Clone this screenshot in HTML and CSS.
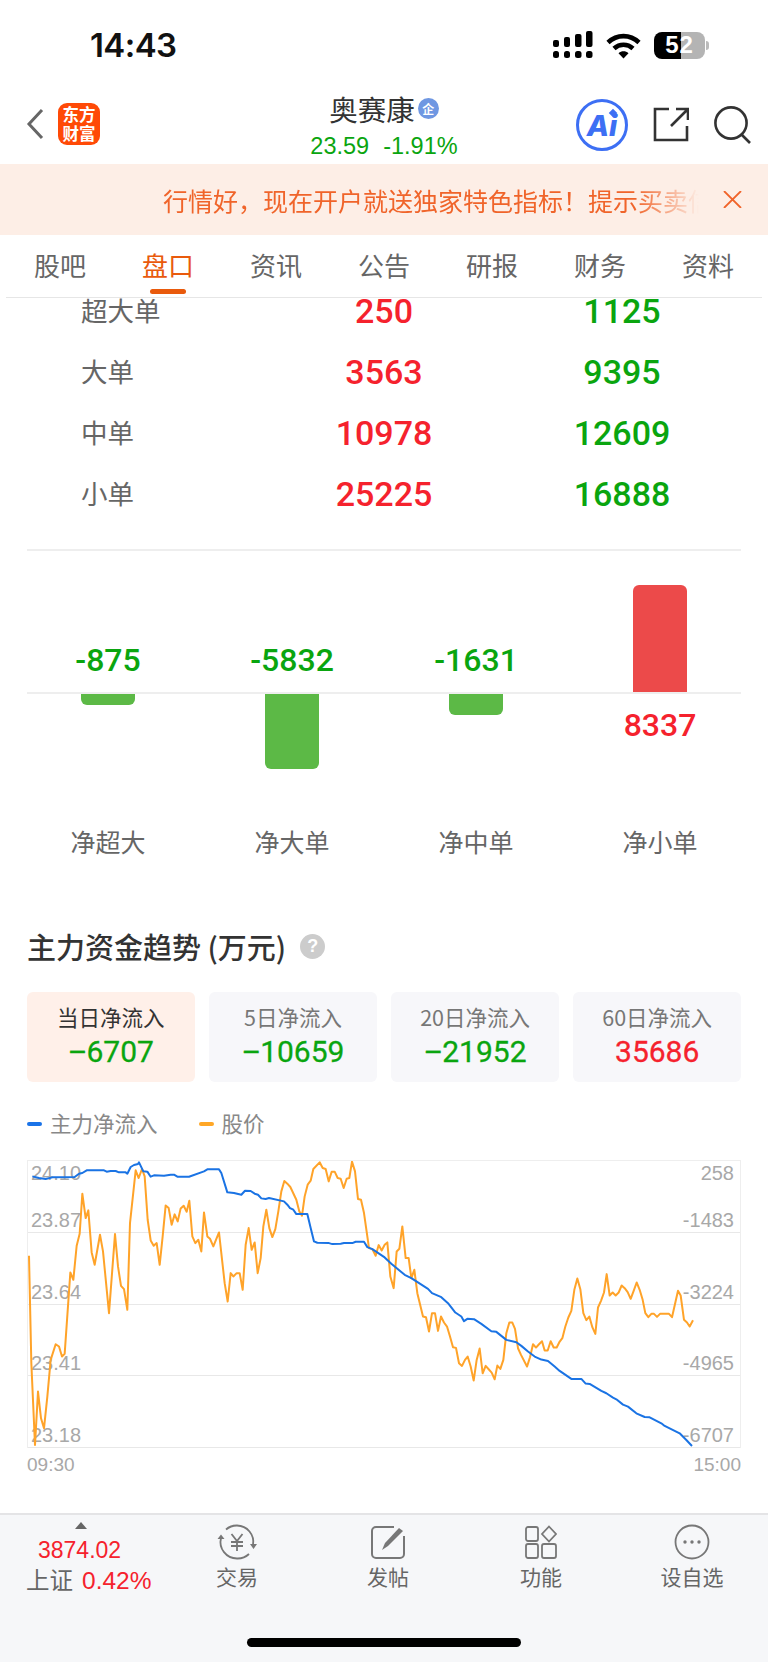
FILE: index.html
```html
<!DOCTYPE html>
<html lang="zh">
<head>
<meta charset="utf-8">
<title>奥赛康</title>
<link rel="stylesheet" href="styles.css">
</head>
<body>
<div class="app">
  <div class="status">
    <span class="time">14:43</span>
    <div class="status-icons">
      <svg class="signal" width="40" height="28" viewBox="0 0 40 28"><g fill="#000"><rect x="0" y="9" width="6" height="7" rx="2"/><rect x="11" y="6" width="6" height="10" rx="2"/><rect x="22" y="3" width="6.500" height="13" rx="2"/><rect x="33" y="0" width="6.500" height="16" rx="2"/><rect x="0" y="20" width="6" height="7" rx="2.500"/><rect x="11" y="20" width="6" height="7" rx="2.500"/><rect x="22" y="20" width="6.500" height="7" rx="2.500"/><rect x="33" y="20" width="6.500" height="7" rx="2.500"/></g></svg>
      <svg class="wifi" width="35" height="27" viewBox="0 0 35 27"><g fill="none" stroke="#000" stroke-width="4.600"><path d="M2 10.500C11 2 24 2 33 10.500"/><path d="M8 16.500C13.500 11.500 21.500 11.500 27 16.500"/></g><path d="M12.500 21.200C15.500 18.700 19.500 18.700 22.500 21.200L17.500 26.500Z" fill="#000"/></svg>
      <div class="battery"><span class="battery-level">52</span></div>
      <span class="battery-cap"></span>
    </div>
  </div>

  <header class="nav">
    <div class="nav-left">
      <svg width="18" height="32" viewBox="0 0 18 32"><path d="M16 2 3 16l13 14" fill="none" stroke="#666" stroke-width="3"/></svg>
      <div class="logo"><span>东方</span><span>财富</span></div>
    </div>
    <div class="nav-center">
      <div class="nav-title">奥赛康<span class="nav-badge">企</span></div>
      <div class="nav-price"><span>23.59</span><span>-1.91%</span></div>
    </div>
    <div class="nav-right">
      <div class="ai"><span class="ai-text">Ai</span><span class="ai-star"></span></div>
      <svg width="36" height="35" viewBox="0 0 36 35"><path d="M16 2H2v31h32V19M18 19 34 3M23 2h12v11" fill="none" stroke="#333" stroke-width="2.600"/></svg>
      <svg width="37" height="38" viewBox="0 0 37 38"><circle cx="17" cy="17" r="15.600" fill="none" stroke="#333" stroke-width="2.600"/><path d="m27 28 9 9" fill="none" stroke="#333" stroke-width="2.600"/></svg>
    </div>
  </header>

  <div class="banner">
    <div class="banner-text"><span>行情好，现在开户就送独家特色指标！提示买卖信号</span></div>
    <svg class="banner-close" width="19" height="17" viewBox="0 0 19 17"><path d="m1 0 17 17M18 0 1 17" fill="none" stroke="#f0642a" stroke-width="1.800"/></svg>
  </div>

  <nav class="tabs">
    <span class="tab">股吧</span>
    <span class="tab tab-active">盘口</span>
    <span class="tab">资讯</span>
    <span class="tab">公告</span>
    <span class="tab">研报</span>
    <span class="tab">财务</span>
    <span class="tab">资料</span>
  </nav>

  <main class="main">
    <section class="orders">
      <div class="order"><span class="order-label">超大单</span><span class="num red">250</span><span class="num green">1125</span></div>
      <div class="order"><span class="order-label">大单</span><span class="num red">3563</span><span class="num green">9395</span></div>
      <div class="order"><span class="order-label">中单</span><span class="num red">10978</span><span class="num green">12609</span></div>
      <div class="order"><span class="order-label">小单</span><span class="num red">25225</span><span class="num green">16888</span></div>
    </section>

    <div class="divider"></div>

    <section class="net">
      <div class="net-top"><span class="net-val green">-875</span></div>
      <div class="net-top"><span class="net-val green">-5832</span></div>
      <div class="net-top"><span class="net-val green">-1631</span></div>
      <div class="net-top"><div class="bar bar-up"></div></div>
      <div class="net-line"></div>
      <div class="net-bottom"><div class="bar bar-down bar-a"></div></div>
      <div class="net-bottom"><div class="bar bar-down bar-b"></div></div>
      <div class="net-bottom"><div class="bar bar-down bar-c"></div></div>
      <div class="net-bottom"><span class="net-val net-val-low red">8337</span></div>
      <span class="net-label">净超大</span>
      <span class="net-label">净大单</span>
      <span class="net-label">净中单</span>
      <span class="net-label">净小单</span>
    </section>

    <section class="trend">
      <h2 class="trend-title">主力资金趋势 (万元)<span class="help">?</span></h2>
      <div class="cards">
        <div class="card card-active"><span class="card-label">当日净流入</span><span class="card-val green"><span class="dash">–</span>6707</span></div>
        <div class="card"><span class="card-label">5日净流入</span><span class="card-val green"><span class="dash">–</span>10659</span></div>
        <div class="card"><span class="card-label">20日净流入</span><span class="card-val green"><span class="dash">–</span>21952</span></div>
        <div class="card"><span class="card-label">60日净流入</span><span class="card-val red">35686</span></div>
      </div>
      <div class="legend">
        <span class="legend-dash dash-blue"></span><span class="legend-text">主力净流入</span>
        <span class="legend-dash dash-orange"></span><span class="legend-text">股价</span>
      </div>
      <div class="chart">
        <div class="band band-first">
          <div class="axis"><span>24.10</span><span>258</span></div>
          <div class="axis"><span>23.87</span><span>-1483</span></div>
        </div>
        <div class="band"><div class="axis"><span>23.64</span><span>-3224</span></div></div>
        <div class="band"><div class="axis"><span>23.41</span><span>-4965</span></div></div>
        <div class="band"><div class="axis"><span>23.18</span><span>-6707</span></div></div>
        <svg class="lines" viewBox="82 94 2142 860" preserveAspectRatio="none">
          <polyline class="line-orange" points="85,378 92,700 103,945 112,785 121,865 130,895 140,800 150,690 165,643 175,650 184,680 192,672 209,428 218,450 228,348 237,312 245,192 255,265 263,242 273,368 282,405 298,315 307,365 325,550 343,313 352,410 361,468 370,478 380,540 388,280 405,122 414,145 424,118 432,140 441,270 450,332 459,348 468,340 477,405 486,320 495,227 504,235 513,285 522,254 531,275 540,236 549,228 558,246 566,213 575,320 584,340 593,330 602,365 610,248 620,320 628,327 638,350 655,308 672,460 681,515 690,430 698,440 708,430 717,430 726,480 735,345 744,295 753,360 762,338 771,430 780,385 788,290 797,240 806,295 815,322 824,298 833,245 842,185 851,154 860,162 869,172 887,210 896,245 904,258 912,200 921,165 930,153 938,118 957,98 966,115 975,118 984,155 993,126 1002,126 1011,145 1020,147 1029,175 1038,147 1046,145 1054,96 1063,125 1072,208 1081,210 1090,250 1105,355 1115,358 1125,378 1134,346 1143,362 1152,345 1160,338 1169,440 1179,475 1188,365 1196,357 1205,290 1215,385 1224,385 1232,445 1241,420 1250,490 1267,560 1276,562 1285,605 1294,550 1303,550 1312,603 1321,560 1330,578 1339,590 1348,620 1357,652 1366,654 1375,700 1384,708 1393,690 1401,680 1410,710 1419,752 1428,690 1437,656 1446,730 1455,708 1464,718 1473,728 1482,748 1490,707 1499,717 1508,690 1517,610 1526,578 1535,578 1543,597 1552,655 1561,675 1579,710 1588,682 1597,643 1606,653 1615,643 1624,634 1632,662 1641,662 1650,634 1659,653 1668,653 1676,637 1685,625 1694,590 1703,563 1712,543 1721,480 1730,446 1739,478 1748,550 1757,571 1766,560 1775,592 1784,612 1792,533 1801,513 1810,488 1818,433 1827,497 1836,488 1845,497 1854,488 1863,467 1872,475 1881,487 1890,507 1899,483 1908,458 1917,480 1926,510 1934,550 1943,562 1952,552 1960,552 1969,561 1978,552 2005,552 2014,562 2032,483 2040,497 2050,570 2059,578 2067,590 2077,571"/>
          <polyline class="line-blue" points="95,140 115,145 135,148 155,143 222,142 235,132 245,130 258,122 310,122 318,126 330,124 345,124 355,128 375,128 380,132 390,112 400,106 412,103 415,98 428,125 440,126 450,141 460,137 490,138 510,135 520,135 530,141 565,141 610,125 620,119 655,119 662,130 680,188 700,190 722,195 733,183 750,184 762,192 772,195 782,206 795,208 805,205 850,215 860,225 868,235 878,240 887,253 920,253 930,295 940,335 950,339 985,340 995,343 1020,342 1030,340 1055,340 1065,336 1090,336 1100,352 1115,358 1152,383 1172,402 1212,435 1232,445 1282,477 1294,490 1322,502 1342,520 1364,548 1382,560 1390,574 1400,567 1420,568 1442,582 1472,604 1487,606 1517,630 1547,637 1562,648 1582,665 1602,680 1622,689 1642,693 1662,710 1677,723 1712,747 1742,747 1755,761 1767,762 1802,783 1817,790 1837,803 1847,808 1867,824 1882,830 1907,850 1932,861 1947,862 1982,880 1992,888 2037,910 2057,930 2074,948"/>
        </svg>
      </div>
      <div class="times"><span>09:30</span><span>15:00</span></div>
    </section>
  </main>

  <footer class="footer">
    <div class="foot-row">
      <div class="index">
        <span class="index-tri"></span>
        <span class="index-val">3874.02</span>
        <div class="index-row"><span class="index-name">上证</span><span class="index-pct">0.42%</span></div>
      </div>
      <div class="foot-item foot-a">
        <svg width="42" height="36" viewBox="0 0 42 36"><g fill="none" stroke="#777" stroke-width="1.800"><path d="M10 5.500A16.500 16.500 0 0 1 21 1.500 16.500 16.500 0 0 1 37 21"/><path d="M33 30A16.500 16.500 0 0 1 21 34.500 16.500 16.500 0 0 1 5 14"/><path d="M15.500 10 21 17l5.500-7M21 17v10M15 18h12M15 22h12"/></g><path d="M1.500 15 5 10.500 8.500 15ZM34 20h7l-3.500 5Z" fill="#777"/></svg>
        <span>交易</span>
      </div>
      <div class="foot-item foot-b">
        <svg width="36" height="34" viewBox="0 0 36 34"><path d="M24 2H6a4 4 0 0 0-4 4v23a4 4 0 0 0 4 4h24a4 4 0 0 0 4-4V11" fill="none" stroke="#777" stroke-width="2"/><path d="m12 25 3-7L29 3l4 3-15 15Z" fill="#777"/></svg>
        <span>发帖</span>
      </div>
      <div class="foot-item foot-c">
        <svg width="32" height="34" viewBox="0 0 32 34"><g fill="none" stroke="#777" stroke-width="1.800"><rect x="1" y="2" width="12" height="14" rx="2"/><path d="m24 1.500 7 7.500-7 7.500-7-7.500Z"/><rect x="1" y="19" width="12" height="14" rx="2"/><rect x="17" y="19" width="14" height="14" rx="2"/></g></svg>
        <span>功能</span>
      </div>
      <div class="foot-item foot-d">
        <svg width="36" height="36" viewBox="0 0 36 36"><circle cx="18" cy="18" r="16.500" fill="none" stroke="#777" stroke-width="1.800"/><g fill="#777"><circle cx="11" cy="18" r="1.700"/><circle cx="18" cy="18" r="1.700"/><circle cx="25" cy="18" r="1.700"/></g></svg>
        <span>设自选</span>
      </div>
    </div>
    <div class="home"></div>
  </footer>
</div>
</body>
</html>
```

FILE: styles.css
```css
* { box-sizing: border-box; margin: 0; padding: 0; }
html, body { width: 768px; height: 1662px; overflow: hidden; background: #fff; }
body { font-family: "Noto Sans CJK SC", "Liberation Sans", sans-serif; color: #333; }
.app { width: 768px; height: 1662px; display: flex; flex-direction: column; }

.status { height: 90px; flex: none; display: flex; align-items: center; justify-content: space-between; padding: 0 59px 0 90px; }
.time { font: 600 33px/1 Inter, "Liberation Sans", sans-serif; color: #111; letter-spacing: -.6px; }
.status-icons { display: flex; align-items: center; }
.signal { margin-right: 13px; }
.wifi { margin-right: 13px; }
.battery { width: 51px; height: 27px; border-radius: 8px; background: linear-gradient(90deg, #000 52%, #b4b4b4 52%); display: flex; align-items: center; justify-content: center; }
.battery-level { font: 700 24px/1 "Liberation Sans", sans-serif; color: #fff; letter-spacing: 1px; }
.battery-cap { width: 3px; height: 9px; background: #bbb; border-radius: 0 3px 3px 0; margin-left: 1px; }

.nav { height: 74px; flex: none; display: grid; grid-template-columns: 1fr auto 1fr; }
.nav-left { display: flex; align-items: center; gap: 14px; padding: 0 0 7px 26px; }
.logo { width: 42px; height: 42px; border-radius: 9px; background: #ff4a07; color: #fff; font: 700 16.500px/19px "Noto Sans CJK SC", sans-serif; display: flex; flex-direction: column; align-items: center; justify-content: center; }
.nav-center { display: flex; flex-direction: column; align-items: center; }
.nav-title { font-size: 28.500px; line-height: 37px; color: #333; display: flex; align-items: center; gap: 3px; }
.nav-badge { width: 21px; height: 21px; border-radius: 50%; background: #6f97e2; color: #fff; font-size: 12px; font-weight: 700; line-height: 21px; text-align: center; }
.nav-price { font: 400 23.500px/28px "Liberation Sans", sans-serif; color: #0aa50f; margin-top: 5px; display: flex; gap: 14px; }
.nav-right { display: flex; align-items: center; justify-content: flex-end; gap: 25px; padding: 0 17px 5px 0; }
.ai { position: relative; width: 52px; height: 52px; border: 3px solid #3d6ff4; border-radius: 50%; display: flex; align-items: center; justify-content: center; }
.ai-text { font: italic 800 29px/1 Inter, "Liberation Sans", sans-serif; color: #3d6ff4; margin-top: 2px; }
.ai-star { position: absolute; right: 9px; top: 8px; width: 6px; height: 6px; background: #3d6ff4; transform: rotate(45deg); }

.banner { height: 71px; flex: none; background: #fdeee6; display: flex; align-items: center; padding-left: 163px; }
.banner-text { width: 536px; overflow: hidden; white-space: nowrap; font-size: 25px; line-height: 40px; color: #f0642a; -webkit-mask-image: linear-gradient(90deg, #000 88%, transparent 100%); mask-image: linear-gradient(90deg, #000 88%, transparent 100%); }
.banner-close { margin-left: 24px; }

.tabs { height: 63px; flex: none; margin: 0 6px; display: grid; grid-template-columns: repeat(7, 1fr); border-bottom: 1.500px solid #e6e6e6; }
.tab { position: relative; text-align: center; font-size: 26px; line-height: 60px; color: #666; }
.tab-active { color: #e95a0c; }
.tab-active::after { content: ""; position: absolute; left: 36px; bottom: 3px; width: 36px; height: 5px; border-radius: 3px; background: #e95a0c; }

.main { flex: 1; overflow: hidden; }
.orders { margin-top: -17px; padding-left: 81px; }
.order { height: 61px; display: grid; grid-template-columns: 203px 200px 238px; align-items: center; }
.order-label { font-size: 26.500px; color: #666; padding-bottom: 5px; }
.num { font: 500 34px/1 Roboto, "Liberation Sans", sans-serif; text-align: center; padding-bottom: 2px; }
.num + .num { padding-left: 38px; }
.red { color: #f5222d; }
.green { color: #0aa50f; }

.divider { height: 2px; margin: 24px 27px 0; background: #eee; }

.net { padding-left: 16px; display: grid; grid-template-columns: repeat(4, 184px); }
.net-top { height: 141px; display: flex; flex-direction: column; align-items: center; justify-content: flex-end; }
.net-bottom { height: 107px; display: flex; flex-direction: column; align-items: center; }
.net-line { grid-column: 1 / -1; height: 2px; margin-left: 11px; width: 714px; background: #eee; }
.net-val { font: 500 32px/36px Roboto, "Liberation Sans", sans-serif; margin-bottom: 14px; }
.net-val-low { margin: 13px 0 0; }
.bar { width: 54px; }
.bar-up { height: 107px; background: #ec4a4a; border-radius: 6px 6px 0 0; }
.bar-down { background: #5cb946; border-radius: 0 0 6px 6px; }
.bar-a { height: 11px; }
.bar-b { height: 75px; }
.bar-c { height: 21px; }
.net-label { font-size: 25px; line-height: 36px; color: #666; text-align: center; margin-top: 22px; }

.trend { padding: 0 27px; }
.trend-title { margin-top: 67px; font-size: 29px; font-weight: 500; line-height: 40px; color: #333; display: flex; align-items: center; }
.help { width: 25px; height: 25px; margin-left: 14px; border-radius: 50%; background: #ccc; color: #fff; font: 700 18px/25px "Liberation Sans", sans-serif; text-align: center; }
.cards { margin-top: 26px; display: grid; grid-template-columns: repeat(4, 1fr); gap: 14.500px; }
.card { height: 90px; border-radius: 6px; background: #f7f7fa; display: flex; flex-direction: column; align-items: center; padding-top: 8px; }
.card-active { background: #fff0e9; }
.card-label { font-size: 21.500px; line-height: 34px; color: #777; }
.card-active .card-label { color: #333; }
.card-val { font: 400 30px/36px Roboto, "Liberation Sans", sans-serif; -webkit-text-stroke: .3px currentColor; }
.dash { letter-spacing: -4px; margin-right: 3px; }
.legend { margin-top: 27px; height: 30px; display: flex; align-items: center; font-size: 21.500px; color: #888; }
.legend-dash { width: 15px; height: 4px; border-radius: 2px; margin-right: 8px; }
.legend-text { margin-right: 41px; line-height: 30px; padding-bottom: 2px; }
.legend-text:last-child { margin-right: 0; }
.dash-blue { background: #1a73e8; }
.dash-orange { background: #ffa726; }

.chart { position: relative; margin-top: 21px; height: 288px; border: 1px solid #eee; border-bottom: 0; display: grid; grid-template-rows: repeat(4, 1fr); }
.band { border-bottom: 1.500px solid #e8e8e8; display: flex; flex-direction: column; justify-content: flex-end; }
.band-first { justify-content: space-between; }
.axis { display: flex; justify-content: space-between; padding: 0 6px 0 3px; font: 400 20px/24px "Liberation Sans", sans-serif; color: #a8a8a8; }
.lines { position: absolute; left: 0; top: 0; width: 714px; height: 287px; }
.lines polyline { fill: none; stroke-width: 6; stroke-linejoin: round; }
.line-orange { stroke: #ffa329; }
.line-blue { stroke: #1a73e4; }
.times { margin-top: 5px; display: flex; justify-content: space-between; font: 400 19px/24px "Liberation Sans", sans-serif; color: #a8a8a8; }

.footer { height: 149px; flex: none; background: #f6f7f9; border-top: 2px solid #e4e4e6; display: flex; flex-direction: column; }
.foot-row { height: 123px; position: relative; display: flex; }
.index { width: 162px; display: flex; flex-direction: column; align-items: flex-start; padding-left: 26px; }
.index-tri { margin: 7px 0 0 49px; width: 0; height: 0; border: 6px solid transparent; border-top: 0; border-bottom: 7px solid #666; }
.index-val { margin: 6px 0 0 12px; font: 400 23px/30px "Liberation Sans", sans-serif; color: #f5222d; }
.index-row { margin-top: -2px; display: flex; gap: 9px; font-size: 23.500px; line-height: 32px; color: #666; }
.index-pct { font: 400 24.500px/32px "Liberation Sans", sans-serif; color: #f5222d; padding-top: 2px; }
.foot-item { display: flex; flex-direction: column; align-items: center; width: 100px; padding-top: 9px; font-size: 21px; line-height: 30px; color: #666; }
.foot-item svg { height: 36px; margin-bottom: 1px; }
.foot-a { margin-left: 25px; }
.foot-b { margin-left: 51px; }
.foot-c { margin-left: 53px; }
.foot-d { margin-left: 51px; }
.home { width: 274px; height: 9px; border-radius: 5px; background: #000; margin: 0 0 0 247px; }
```
